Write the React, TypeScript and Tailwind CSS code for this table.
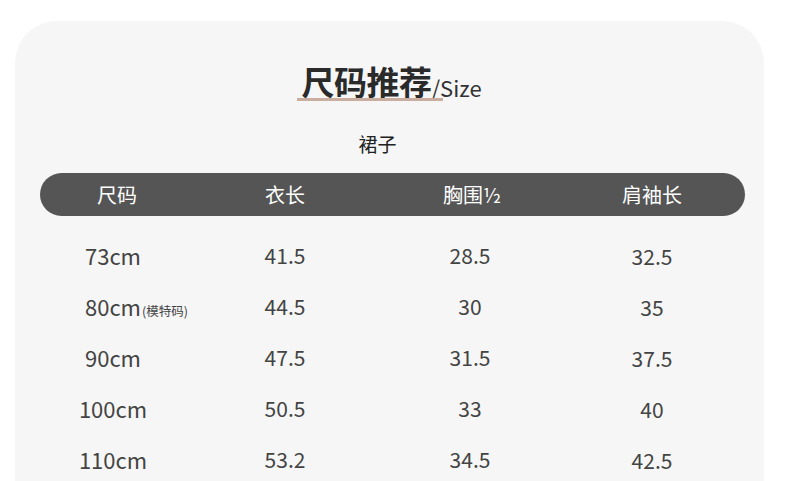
import React from 'react';

type Row = {
  size: string;
  note?: string;
  length: string;
  chest: string;
  sleeve: string;
};

const rows: Row[] = [
  { size: '73cm', length: '41.5', chest: '28.5', sleeve: '32.5' },
  { size: '80cm', note: '(模特码)', length: '44.5', chest: '30', sleeve: '35' },
  { size: '90cm', length: '47.5', chest: '31.5', sleeve: '37.5' },
  { size: '100cm', length: '50.5', chest: '33', sleeve: '40' },
  { size: '110cm', length: '53.2', chest: '34.5', sleeve: '42.5' },
];

const cols = 'grid grid-cols-[154px_182px_192px_168px_1fr]';

const App: React.FC = () => {
  return (
    <div
      className="w-[790px] h-[481px] overflow-hidden bg-white pt-[21px] pl-[15px]"
      style={{ fontFamily: '"Noto Sans CJK SC", "Noto Sans", sans-serif' }}
    >
      <div className="w-[749px] h-[470px] bg-[#f6f6f6] rounded-t-[42px] flex flex-col items-center">
        {/* title */}
        <div className="mt-[38px] ml-[4px] relative flex items-end h-[44px]">
          <span className="text-[33px] leading-[44px] font-bold text-[#2a2a2a] tracking-[-0.5px]">尺码推荐</span>
          <span className="text-[22px] leading-[30px] text-[#333] mb-[1px]">/Size</span>
          <div className="absolute left-[-4px] top-[39px] w-[146px] h-[3px] bg-[#c9ad9f]" />
        </div>

        <div className="mt-[27px] text-[19px] leading-[28px] text-[#222] mr-[24px]">裙子</div>

        {/* header bar */}
        <div className={`${cols} mt-[15px] self-start ml-[25px] w-[705px] h-[43px] rounded-full bg-[#555555] items-center text-white text-[20px] leading-[43px]`}>
          <div className="text-center">尺码</div>
          <div className="text-center">衣长</div>
          <div className="text-center">胸围½</div>
          <div className="text-center">肩袖长</div>
        </div>

        {/* rows */}
        <div className="mt-[14px] self-start ml-[25px] w-[705px] flex flex-col text-[#444] text-[21px]">
          {rows.map((r, i) => (
            <div key={r.size} className={`${cols} h-[51px] items-center`}>
              <div className="flex justify-center pr-[8px]">
                <span className="relative text-[22px]">
                  {r.size}
                  {r.note && (
                    <span className="absolute left-[calc(100%+1px)] bottom-[5px] text-[12.5px] leading-[14px] whitespace-nowrap">
                      {r.note}
                    </span>
                  )}
                </span>
              </div>
              <div className="text-center">{r.length}</div>
              <div className="text-center pr-[4px]">{r.chest}</div>
              <div className={`text-center ${i % 2 === 0 ? 'pt-[3px]' : 'pt-[2px]'}`}>{r.sleeve}</div>
            </div>
          ))}
        </div>
      </div>
    </div>
  );
};

export default App;
